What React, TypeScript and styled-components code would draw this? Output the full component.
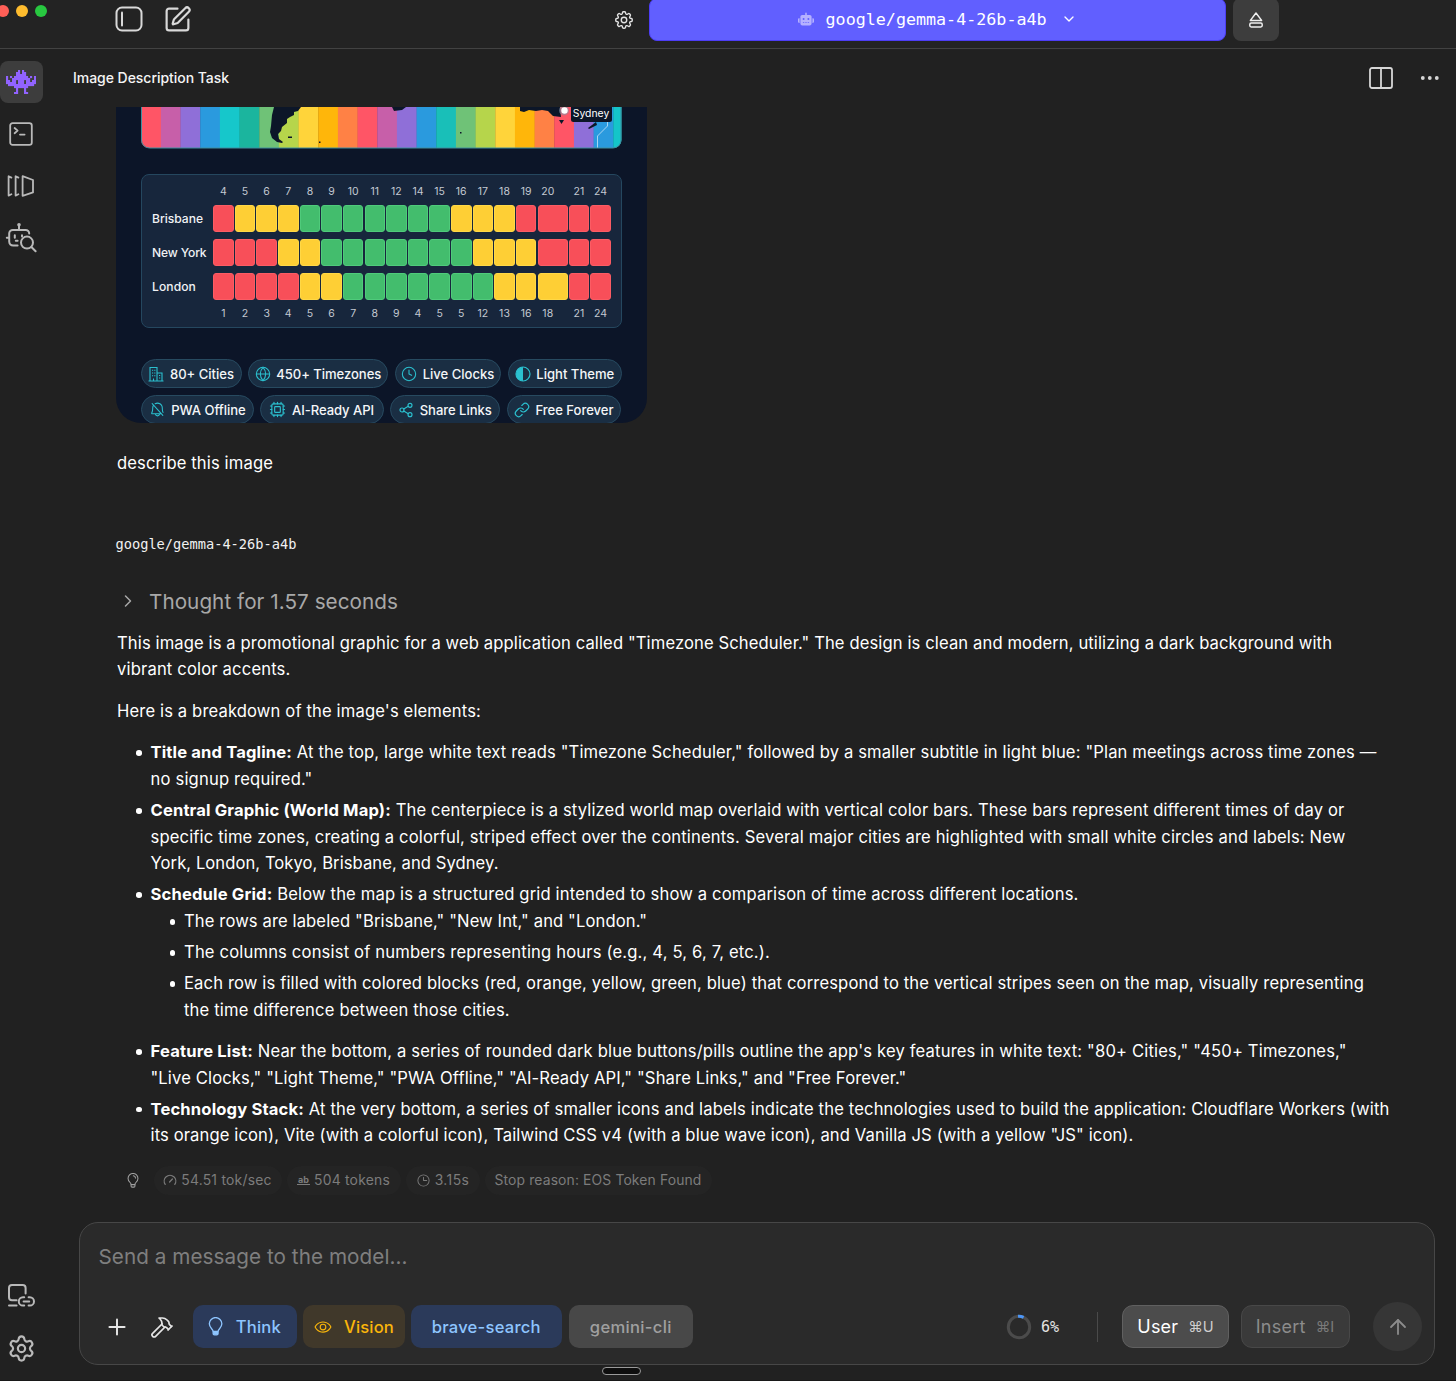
import React from "react";
import styled, { createGlobalStyle, css } from "styled-components";
import { SquarePen, Settings, Globe, Clock, Cpu, Share2, Link, ChevronDown, ChevronRight, Plus, ArrowUp, Hammer } from "lucide-react";
import { PiEye, PiBellSlash, PiClock } from "react-icons/pi";
import { HiOutlineCog8Tooth } from "react-icons/hi2";
import { FaRobot } from "react-icons/fa6";

const sans = `Inter, "Liberation Sans", sans-serif`;
const mono = `"DejaVu Sans Mono", "Liberation Mono", monospace`;

const GlobalStyle = createGlobalStyle`
  * { box-sizing: border-box; }
  html, body { margin: 0; background: #212121; }
  body { font-family: ${sans}; color: #fff; overflow: hidden; }
  svg { display: block; flex: none; }
  p, ul { margin: 0; padding: 0; list-style: none; }
`;

const Window = styled.div`
  display: flex;
  flex-direction: column;
  width: 1456px;
  height: 1381px;
  overflow: hidden;
  background: #212121;
  border-bottom: 1px solid #181818;
`;

const TopBar = styled.header`
  display: flex;
  height: 49px;
  flex: none;
  align-items: flex-start;
  background: #232323;
  border-bottom: 1px solid #424242;
`;

const TrafficLights = styled.div`
  display: flex;
  gap: 7.2px;
  margin: 5.2px 0 0 -3.3px;
`;

const Light = styled.i<{ $color: string }>`
  width: 12px;
  height: 12px;
  border-radius: 50%;
  background: ${(p) => p.$color};
`;

const TopTools = styled.div`
  display: flex;
  align-items: center;
  gap: 20px;
  height: 38px;
  margin-left: 68px;
  color: #d9d9d9;
`;

const GearSlot = styled.div`
  display: flex;
  align-items: center;
  height: 39px;
  margin-left: 420.5px;
  color: #e2e2e2;
`;

const ModelPicker = styled.button`
  display: flex;
  align-items: center;
  justify-content: center;
  width: 577px;
  height: 43px;
  margin: -2px 0 0 14px;
  padding: 0 0 1px 0;
  border: 1.5px solid #4d3df5;
  border-radius: 8px;
  background: #615fff;
  color: #fff;
  font: 16.7px ${mono};
`;

const PickerName = styled.span`
  margin: 0 14px 0 12px;
`;

const Eject = styled.button`
  display: flex;
  align-items: center;
  justify-content: center;
  width: 46.5px;
  height: 43px;
  margin: -2px 0 0 7px;
  padding: 0;
  border: 0;
  border-radius: 8px;
  background: #3d3d3d;
  color: #eee;
`;

const Main = styled.div`
  display: flex;
  flex: 1;
  min-height: 0;
`;

const Sidebar = styled.nav`
  display: flex;
  flex-direction: column;
  width: 42.5px;
  height: 1331px;
  padding: 12px 0 7px;
  color: #b9b9b9;
`;

const SideItem = styled.div<{ $active?: boolean; $h: number }>`
  display: flex;
  align-items: center;
  justify-content: center;
  height: ${(p) => p.$h}px;
  ${(p) =>
    p.$active &&
    css`
      margin-bottom: 5px;
      border-radius: 8px;
      background: #3d3d3d;
    `}
`;

const Spacer = styled.div`
  flex: 1;
`;

const Chat = styled.main`
  display: flex;
  flex-direction: column;
  flex: 1;
  min-width: 0;
`;

const ChatHeader = styled.div`
  display: flex;
  align-items: center;
  gap: 27px;
  height: 58px;
  flex: none;
  padding: 0 16px 0 30.5px;
  color: #d6d6d6;
  font-size: 14px;
`;

const ChatTitle = styled.span`
  flex: 1;
  padding-bottom: 1px;
  color: #f5f5f5;
  font-weight: 500;
`;

const Scroll = styled.section`
  display: flex;
  flex-direction: column;
  height: 1115px;
  flex: none;
  padding-left: 73px;
`;

const Attachment = styled.figure`
  display: flex;
  flex-direction: column;
  width: 531px;
  height: 315.5px;
  flex: none;
  margin: 0;
  padding: 0 24.5px 0 25.5px;
  overflow: hidden;
  border-radius: 0 0 25px 25px;
  background: #0c1528;
`;

const Schedule = styled.div`
  display: grid;
  grid-template-rows: 26.2px 34.1px 34.1px 34.1px 18.6px;
  align-content: start;
  height: 154px;
  flex: none;
  margin-top: 25.3px;
  border: 1.2px solid #25475f;
  border-radius: 8px;
  background: #17263c;
`;

const ScheduleRow = styled.div<{ $top?: number }>`
  display: grid;
  grid-template-columns: 60px repeat(15, 20.5px) 30px repeat(2, 20.5px);
  column-gap: 1.13px;
  align-items: center;
  padding: ${(p) => p.$top ?? 0}px 0 0 10px;
`;

const City = styled.span`
  font-size: 12.1px;
  font-weight: 500;
  color: #f0f2f5;
  white-space: nowrap;
`;

const Hour = styled.span`
  width: 20.5px;
  text-align: center;
  font-size: 10.5px;
  color: #c3c9d2;
`;

const slotColors: Record<string, [string, string]> = {
  r: ["#f84f59", "#fb5c64"],
  y: ["#fecf35", "#ffd846"],
  g: ["#43bd6d", "#4fcb7b"],
};

const Slot = styled.i<{ $kind: string }>`
  height: 26.5px;
  border-radius: 3px;
  border: 1px solid ${(p) => slotColors[p.$kind][1]};
  background: ${(p) => slotColors[p.$kind][0]};
`;

const Features = styled.div<{ $mt: number }>`
  display: flex;
  gap: 6.5px;
  height: 29.5px;
  flex: none;
  margin-top: ${(p) => p.$mt}px;
`;

const Feature = styled.span<{ $w: number }>`
  display: flex;
  align-items: center;
  justify-content: center;
  gap: 5.5px;
  width: ${(p) => p.$w}px;
  border: 1.2px solid #274a60;
  border-radius: 15px;
  background: #1a2e43;
  color: #f4f6f8;
  font-size: 13.05px;
  font-weight: 500;
  white-space: nowrap;
  svg {
    color: #2bc0cf;
  }
`;

const Prompt = styled.p`
  margin-top: 27px;
  padding-left: 1.5px;
  line-height: 27px;
  font-size: 16.6px;
`;

const ModelName = styled.p`
  margin-top: 57.5px;
  line-height: 20px;
  font-family: ${mono};
  font-size: 13.66px;
  color: #f2f2f2;
`;

const Thought = styled.div`
  display: flex;
  align-items: center;
  gap: 11.5px;
  height: 28px;
  margin-top: 33px;
  padding-left: 2px;
  color: #a8a8a8;
  font-size: 20.7px;
`;

const Answer = styled.article`
  display: flex;
  flex-direction: column;
  gap: 14.9px;
  padding: 14.9px 0 0 1.5px;
  font-size: 16.6px;
  line-height: 26.6px;
  white-space: nowrap;
`;

const List = styled.ul<{ $nested?: boolean }>`
  display: flex;
  flex-direction: column;
  gap: 4.5px;
  padding-bottom: ${(p) => (p.$nested ? 10.3 : 0)}px;
`;

const Item = styled.li`
  display: grid;
  grid-template-columns: 19.5px auto;
  padding-left: 14px;
  &::before {
    content: "";
    width: 5.6px;
    height: 5.6px;
    margin: 11px 0 0 5px;
    border-radius: 50%;
    background: #fff;
  }
`;

const Line = styled.span<{ $ls?: number }>`
  display: block;
  width: max-content;
  letter-spacing: ${(p) => p.$ls ?? 0}px;
`;

const Inline = styled.span<{ $ls?: number }>`
  letter-spacing: ${(p) => p.$ls ?? 0}px;
  white-space: nowrap;
`;

const B = styled.b`
  font-weight: 700;
`;

const Stats = styled.div`
  display: flex;
  align-items: center;
  gap: 5px;
  margin-top: 16px;
  padding-left: 10.5px;
  height: 30px;
  color: #7c7c7c;
  font-size: 13.9px;
`;

const StatBulb = styled.span`
  margin: 0 9.5px 0 1px;
  color: #a0a0a0;
`;

const Stat = styled.span<{ $w: number }>`
  display: flex;
  align-items: center;
  justify-content: center;
  gap: 4px;
  width: ${(p) => p.$w}px;
  height: 29px;
  border-radius: 15px;
  background: #242424;
`;

const Ab = styled.u`
  width: 13px;
  text-align: center;
  text-decoration: none;
  border-bottom: 1px solid #7c7c7c;
  font-size: 9px;
  line-height: 8px;
  font-weight: 700;
`;

const Composer = styled.div`
  display: flex;
  flex-direction: column;
  width: 1356px;
  height: 142.5px;
  flex: none;
  margin-left: 36.5px;
  padding: 19px 12px 0 18.5px;
  border: 1px solid #474747;
  border-radius: 19px;
  background: #2a2a2a;
`;

const Placeholder = styled.div`
  height: 30px;
  line-height: 30px;
  font-size: 20.7px;
  color: #7f7f7f;
`;

const Actions = styled.div`
  display: flex;
  align-items: center;
  height: 48px;
  margin-top: 30.5px;
`;

const IconButton = styled.span<{ $ml: number }>`
  display: flex;
  margin-left: ${(p) => p.$ml}px;
  color: #e6e6e6;
`;

const Chip = styled.button<{ $w: number; $bg: string; $fg: string; $ml: number }>`
  display: flex;
  align-items: center;
  justify-content: center;
  gap: 12.5px;
  width: ${(p) => p.$w}px;
  height: 43px;
  margin: 0 0 0 ${(p) => p.$ml}px;
  padding: 0;
  border: 0;
  border-radius: 10px;
  background: ${(p) => p.$bg};
  color: ${(p) => p.$fg};
  font: 500 16.6px ${sans};
`;

const Percent = styled.span`
  margin-left: 8.5px;
  font: 15px ${mono};
  color: #e4e4e4;
`;

const Divider = styled.i`
  width: 1px;
  height: 30px;
  margin: 0 24px 0 38px;
  background: #4a4a4a;
`;

const KeyButton = styled.button<{ $w: number; $bg: string; $fg: string; $key: string; $line: string }>`
  display: flex;
  align-items: center;
  justify-content: center;
  gap: 10px;
  width: ${(p) => p.$w}px;
  height: 43px;
  margin: 0 11.5px 0 0;
  padding: 0;
  border: 1px solid ${(p) => p.$line};
  border-radius: 11px;
  background: ${(p) => p.$bg};
  color: ${(p) => p.$fg};
  font: 18px ${sans};
  kbd {
    font: 14.6px ${sans};
    color: ${(p) => p.$key};
  }
`;

const Send = styled.button`
  display: flex;
  align-items: center;
  justify-content: center;
  width: 49px;
  height: 49px;
  margin: 0 0 0 12px;
  padding: 0;
  border: 0;
  border-radius: 50%;
  background: #363636;
  color: #8c8c8c;
`;

const Handle = styled.div`
  width: 39px;
  height: 8px;
  flex: none;
  margin: 2.5px 0 0 559px;
  border: 1px solid #9a9a9a;
  border-radius: 5px;
  background: #0e0e0e;
`;

const invader = [
  "......#.#......",
  ".....##.##.....",
  ".....#####.....",
  "#.#.#######.#.#",
  "#..#########..#",
  "##.##.###.##.##",
  "#####.###.#####",
  ".#############.",
  "....#######....",
  ".....#...#.....",
  ".....#...#.....",
  "....##...##....",
];

const Invader = () => (
  <svg width="30" height="24" viewBox="0 0 15 12" preserveAspectRatio="none" fill="#9163ff">
    {invader.flatMap((row, y) => [...row].map((c, x) => (c === "#" ? <rect key={`${x}-${y}`} x={x} y={y} width="1.06" height="1.06" /> : null)))}
  </svg>
);

const PanelIcon = () => (
  <svg width="28" height="26" viewBox="0 0 28 26" fill="none" stroke="currentColor" strokeWidth="2" strokeLinecap="round">
    <rect x="1.5" y="1.5" width="25" height="23" rx="5.5" />
    <path d="M7 6.5v13" />
  </svg>
);

const EjectIcon = () => (
  <svg width="16" height="18" viewBox="0 0 16 18" fill="none" stroke="currentColor" strokeWidth="1.5" strokeLinejoin="round">
    <path d="M8 2l5.6 7.4H2.4z" />
    <rect x="1.8" y="12" width="12.4" height="4" rx="1.4" />
  </svg>
);

const BulbIcon = ({ size, shine }: { size: number; shine?: boolean }) => (
  <svg width={size * 0.8} height={size} viewBox="0 0 16 20" fill="none" stroke="currentColor" strokeWidth="1.4" strokeLinecap="round" strokeLinejoin="round">
    <path d="M5.4 15.2c0-2.4-4-3.8-4-8a6.6 6.6 0 0 1 13.2 0c0 4.2-4 5.6-4 8z" />
    <path d="M5.4 15.6h5.2v1.8a1.4 1.4 0 0 1-1.4 1.4H6.8a1.4 1.4 0 0 1-1.4-1.4z" fill={shine ? "none" : "currentColor"} />
    {shine && <path d="M8.4 3.8a3.4 3.4 0 0 1 3 3" />}
  </svg>
);

const TerminalIcon = () => (
  <svg width="24" height="24" viewBox="0 0 24 24" fill="none" stroke="currentColor" strokeWidth="1.8" strokeLinecap="round" strokeLinejoin="round">
    <rect x="1.2" y="1.2" width="21.6" height="21.6" rx="2.4" />
    <path d="M5.6 6l3 2.6-3 2.6M11 12.6h4.6" />
  </svg>
);

const LibraryIcon = () => (
  <svg width="28" height="24" viewBox="0 0 28 24" fill="none" stroke="currentColor" strokeWidth="1.8" strokeLinejoin="round" strokeLinecap="round">
    <path d="M4.4 3.6L1.6 2.2v19.4l2.8-1.3M11.4 3.6L8.6 2.2v19.4l2.8-1.3M15.6 2.2v19.6l10.4-3.4V6z" />
  </svg>
);

const RobotSearchIcon = () => (
  <svg width="32" height="32" viewBox="0 0 32 32" fill="none" stroke="currentColor" strokeWidth="2" strokeLinecap="round" strokeLinejoin="round">
    <circle cx="14" cy="2.8" r="1.8" fill="currentColor" stroke="none" />
    <path d="M14 4v4M12.6 23.6H8.2a4 4 0 0 1-4-4V11.6a3.6 3.6 0 0 1 3.6-3.6h12.8a3.6 3.6 0 0 1 3.6 3.6M1.8 15.8h2.4M9.8 13.2v2.6M17 13.2v1.4M10.8 18.8h1.8" />
    <circle cx="22" cy="20.6" r="6" />
    <path d="M26.4 25l4.2 4.2" />
  </svg>
);

const DeviceLinkIcon = () => (
  <svg width="28" height="26" viewBox="0 0 28 26" fill="none" stroke="currentColor" strokeWidth="2" strokeLinecap="round">
    <path d="M9.6 17.2H5a3 3 0 0 1-3-3V5a3 3 0 0 1 3-3h10.6a3 3 0 0 1 3 3v5.4M2 22.6h7.6" />
    <path d="M17.2 22.6h-1.2a4.2 4.2 0 0 1 0-8.4h1.2M21.6 14.2h1.2a4.2 4.2 0 0 1 0 8.4h-1.2M16.6 18.4h5.6" />
  </svg>
);

const ColumnsIcon = () => (
  <svg width="24" height="22" viewBox="0 0 24 22" fill="none" stroke="currentColor" strokeWidth="1.8">
    <rect x="1" y="1" width="22" height="20" rx="2" />
    <path d="M12 1v20" />
  </svg>
);

const DotsIcon = () => (
  <svg width="20" height="6" viewBox="0 0 20 6" fill="currentColor">
    <circle cx="2.8" cy="3" r="1.9" />
    <circle cx="9.8" cy="3" r="1.9" />
    <circle cx="16.8" cy="3" r="1.9" />
  </svg>
);

const BuildingsIcon = () => (
  <svg width="16" height="16" viewBox="0 0 16 16" fill="none" stroke="currentColor" strokeWidth="1.1">
    <path d="M.5 15h15M2 15V1.5h7V15M9 7h5v8M4 4.2h1.2M6.2 4.2h1.2M4 7h1.2M6.2 7h1.2M4 9.8h1.2M6.2 9.8h1.2M11 9.5h1.2M11 12h1.2M5.5 15v-2.5" />
  </svg>
);

const HalfIcon = () => (
  <svg width="16" height="16" viewBox="0 0 16 16">
    <circle cx="8" cy="8" r="7" fill="none" stroke="currentColor" strokeWidth="1.2" />
    <path d="M8 1a7 7 0 0 0 0 14z" fill="currentColor" />
  </svg>
);

const SpeedIcon = () => (
  <svg width="14" height="14" viewBox="0 0 14 14" fill="none" stroke="currentColor" strokeWidth="1.2" strokeLinecap="round">
    <path d="M2.2 11.4a5.8 5.8 0 1 1 9.6 0M6.6 9l2.8-3" />
  </svg>
);

const RingIcon = () => (
  <svg width="26" height="26" viewBox="0 0 26 26" fill="none" strokeWidth="3">
    <circle cx="13" cy="13" r="10.7" stroke="#4b4b4b" />
    <path d="M12 2.3a10.7 10.7 0 0 1 5.6 1.1" stroke="#4c95f5" />
  </svg>
);

const stripes = "#ff5566 #c75fa9 #8f6fd8 #2a9ade #16c7cb #1bb59e #6fc277 #b6d54b #ffd43a #ffb60a #ff8145 #ff5566 #c75fa9 #8f6fd8 #2a9ade #19bfb8 #6fc277 #b6d54b #ffd43a #ffb60a #ff8145 #ff5566 #8f6fd8 #2a9ade #14c5c9".split(" ");

const MapStrip = () => (
  <svg width="481" height="42" viewBox="0 0 481 42">
    <defs>
      <clipPath id="mapEdge">
        <path d="M0-5H480.5V33a8 8 0 0 1-8 8H8a8 8 0 0 1-8-8z" />
      </clipPath>
    </defs>
    <g clipPath="url(#mapEdge)">
      {stripes.map((c, i) => (
        <rect key={i} x={i * 19.67 + 0.2} y="-1" width="20" height="44" fill={c} />
      ))}
      <g fill="#0c1628">
        <path d="M133 0H160L157 4 153 5 153 8 149 10 146 12 146 16 141 20 140 24 137 27 138 32 142 35 141 36 136 35 131 31 129 25 130 19 131 8z" />
        <path d="M147 29.5h4v1.5h-4zM178 34.5h1.500v1.500H178zM319 25h1.500v1.500H319z" />
        <path d="M251 0h14l-4 3-8 1zM379 0h40l1 10-8-1-5-5-6-1-6 1-7-1-5 2-4-1z" />
        <path d="M418 13h5l-2.5 4zM455 15l-8 6 1 1 8-4z" />
      </g>
      <path d="M466.5 0v19l-10 10v13" fill="none" stroke="#a9d5f2" strokeWidth="1" />
      <circle cx="423" cy="3.5" r="5" fill="#8893a5" opacity=".6" />
      <circle cx="423.5" cy="3.5" r="3.2" fill="#fff" />
      <rect x="430" y="-6" width="41" height="21" rx="2.5" fill="#0c1628" />
      <text x="450" y="10.2" textAnchor="middle" fontFamily={sans} fontSize="10.4" fill="#fff">
        Sydney
      </text>
    </g>
    <path d="M.5 0V33a8 8 0 0 0 8 8h463.500a8 8 0 0 0 8-8V0" fill="none" stroke="#3f8f9f" strokeWidth="1" />
  </svg>
);

const topHours = [4, 5, 6, 7, 8, 9, 10, 11, 12, 14, 15, 16, 17, 18, 19, 20, 21, 24];
const bottomHours = [1, 2, 3, 4, 5, 6, 7, 8, 9, 4, 5, 5, 12, 13, 16, 18, 21, 24];
const cities: [string, string, number][] = [
  ["Brisbane", "ryyygggggggyyyrrrr", -0.02],
  ["New York", "rrryygggggggyyyrrr", -0.14],
  ["London", "rrrryygggggggyyyrr", 0.08],
];

const Hours = ({ values, top }: { values: number[]; top?: number }) => (
  <ScheduleRow $top={top}>
    <span />
    {values.map((v, i) => (
      <Hour key={i}>{v}</Hour>
    ))}
  </ScheduleRow>
);

export default function App() {
  return (
    <>
      <GlobalStyle />
      <Window>
        <TopBar>
          <TrafficLights>
            <Light $color="#ff5f57" />
            <Light $color="#febc2e" />
            <Light $color="#28c840" />
          </TrafficLights>
          <TopTools>
            <PanelIcon />
            <SquarePen size={29} strokeWidth={1.8} />
          </TopTools>
          <GearSlot>
            <HiOutlineCog8Tooth size={22} />
          </GearSlot>
          <ModelPicker>
            <FaRobot size={16} color="#b5b1ff" />
            <PickerName>google/gemma-4-26b-a4b</PickerName>
            <ChevronDown size={16} strokeWidth={2} />
          </ModelPicker>
          <Eject>
            <EjectIcon />
          </Eject>
        </TopBar>
        <Main>
          <Sidebar>
            <SideItem $h={42} $active>
              <Invader />
            </SideItem>
            <SideItem $h={52}>
              <TerminalIcon />
            </SideItem>
            <SideItem $h={52}>
              <LibraryIcon />
            </SideItem>
            <SideItem $h={52}>
              <RobotSearchIcon />
            </SideItem>
            <Spacer />
            <SideItem $h={57}>
              <DeviceLinkIcon />
            </SideItem>
            <SideItem $h={49}>
              <Settings size={29} strokeWidth={1.8} />
            </SideItem>
          </Sidebar>
          <Chat>
            <ChatHeader>
              <ChatTitle>
                <Inline $ls={-0.04}>Image Description Task</Inline>
              </ChatTitle>
              <ColumnsIcon />
              <DotsIcon />
            </ChatHeader>
            <Scroll>
              <Attachment>
                <MapStrip />
                <Schedule>
                  <Hours values={topHours} top={5.4} />
                  {cities.map(([name, slots, ls]) => (
                    <ScheduleRow key={name}>
                      <City>
                        <Inline $ls={ls}>{name}</Inline>
                      </City>
                      {[...slots].map((k, i) => (
                        <Slot key={i} $kind={k} />
                      ))}
                    </ScheduleRow>
                  ))}
                  <Hours values={bottomHours} />
                </Schedule>
                <Features $mt={30.5}>
                  <Feature $w={100.5}><BuildingsIcon />80+ Cities</Feature>
                  <Feature $w={140}><Globe size={16} strokeWidth={1.6} /><Inline $ls={-0.04}>450+ Timezones</Inline></Feature>
                  <Feature $w={106.5}><Clock size={16} strokeWidth={1.6} />Live Clocks</Feature>
                  <Feature $w={114}><HalfIcon />Light Theme</Feature>
                </Features>
                <Features $mt={6.5}>
                  <Feature $w={112.5}><PiBellSlash size={17} /><Inline $ls={-0.03}>PWA Offline</Inline></Feature>
                  <Feature $w={123.5}><Cpu size={17} strokeWidth={1.6} /><Inline $ls={-0.05}>AI-Ready API</Inline></Feature>
                  <Feature $w={110}><Share2 size={16} strokeWidth={1.7} /><Inline $ls={-0.04}>Share Links</Inline></Feature>
                  <Feature $w={114.5}><Link size={16} strokeWidth={1.8} /><Inline $ls={-0.02}>Free Forever</Inline></Feature>
                </Features>
              </Attachment>
              <Prompt><Inline $ls={0.131}>describe this image</Inline></Prompt>
              <ModelName>google/gemma-4-26b-a4b</ModelName>
              <Thought>
                <ChevronRight size={20} strokeWidth={1.8} />
                <Inline $ls={0.04}>Thought for 1.57 seconds</Inline>
              </Thought>
              <Answer>
                <p>
                  <Line $ls={0.111}>This image is a promotional graphic for a web application called "Timezone Scheduler." The design is clean and modern, utilizing a dark background with</Line>
                  <Line $ls={0.166}>vibrant color accents.</Line>
                </p>
                <p>
                  <Line $ls={0.135}>Here is a breakdown of the image's elements:</Line>
                </p>
                <List>
                  <Item>
                    <div>
                      <Line $ls={0.134}><B>Title and Tagline:</B> At the top, large white text reads "Timezone Scheduler," followed by a smaller subtitle in light blue: "Plan meetings across time zones —</Line>
                      <Line $ls={0.179}>no signup required."</Line>
                    </div>
                  </Item>
                  <Item>
                    <div>
                      <Line $ls={0.135}><B>Central Graphic (World Map):</B> The centerpiece is a stylized world map overlaid with vertical color bars. These bars represent different times of day or</Line>
                      <Line $ls={0.144}>specific time zones, creating a colorful, striped effect over the continents. Several major cities are highlighted with small white circles and labels: New</Line>
                      <Line $ls={0.063}>York, London, Tokyo, Brisbane, and Sydney.</Line>
                    </div>
                  </Item>
                  <Item>
                    <div>
                      <Line $ls={0.151}><B>Schedule Grid:</B> Below the map is a structured grid intended to show a comparison of time across different locations.</Line>
                      <List $nested>
                        <Item>
                          <Line $ls={0.108}>The rows are labeled "Brisbane," "New Int," and "London."</Line>
                        </Item>
                        <Item>
                          <Line $ls={0.165}>The columns consist of numbers representing hours (e.g., 4, 5, 6, 7, etc.).</Line>
                        </Item>
                        <Item>
                          <div>
                            <Line $ls={0.133}>Each row is filled with colored blocks (red, orange, yellow, green, blue) that correspond to the vertical stripes seen on the map, visually representing</Line>
                            <Line $ls={0.16}>the time difference between those cities.</Line>
                          </div>
                        </Item>
                      </List>
                    </div>
                  </Item>
                  <Item>
                    <div>
                      <Line $ls={0.16}><B>Feature List:</B> Near the bottom, a series of rounded dark blue buttons/pills outline the app's key features in white text: "80+ Cities," "450+ Timezones,"</Line>
                      <Line $ls={0.127}>"Live Clocks," "Light Theme," "PWA Offline," "AI-Ready API," "Share Links," and "Free Forever."</Line>
                    </div>
                  </Item>
                  <Item>
                    <div>
                      <Line $ls={0.147}><B>Technology Stack:</B> At the very bottom, a series of smaller icons and labels indicate the technologies used to build the application: Cloudflare Workers (with</Line>
                      <Line $ls={0.116}>its orange icon), Vite (with a colorful icon), Tailwind CSS v4 (with a blue wave icon), and Vanilla JS (with a yellow "JS" icon).</Line>
                    </div>
                  </Item>
                </List>
              </Answer>
              <Stats>
                <StatBulb><BulbIcon size={15} shine /></StatBulb>
                <Stat $w={128}><SpeedIcon /><Inline $ls={0.23}>54.51 tok/sec</Inline></Stat>
                <Stat $w={114}><Ab>ab</Ab><Inline $ls={0.22}>504 tokens</Inline></Stat>
                <Stat $w={74}><PiClock size={15} /><Inline $ls={0.45}>3.15s</Inline></Stat>
                <Stat $w={227}><Inline $ls={0.13}>Stop reason: EOS Token Found</Inline></Stat>
              </Stats>
            </Scroll>
            <Composer>
              <Placeholder><Inline $ls={0.05}>Send a message to the model...</Inline></Placeholder>
              <Actions>
                <IconButton $ml={5}><Plus size={26} strokeWidth={1.8} /></IconButton>
                <IconButton $ml={20.5}><Hammer size={24} strokeWidth={1.7} /></IconButton>
                <Chip $w={104} $bg="#2b3a5a" $fg="#8ec5ff" $ml={18.5}><BulbIcon size={19} /><Inline $ls={0.15}>Think</Inline></Chip>
                <Chip $w={102.5} $bg="#40382a" $fg="#fab60a" $ml={6}><PiEye size={18} /><Inline $ls={0.15}>Vision</Inline></Chip>
                <Chip $w={150.5} $bg="#2b3a5a" $fg="#8ec5ff" $ml={6}><Inline $ls={0.22}>brave-search</Inline></Chip>
                <Chip $w={123.5} $bg="#484848" $fg="#a0a0a0" $ml={7.5}><Inline $ls={0.32}>gemini-cli</Inline></Chip>
                <Spacer />
                <RingIcon />
                <Percent>6%</Percent>
                <Divider />
                <KeyButton $w={107} $bg="#4c4c4c" $fg="#fff" $key="#cfcfcf" $line="#606060"><Inline $ls={0.2}>User</Inline><kbd>⌘U</kbd></KeyButton>
                <KeyButton $w={109} $bg="#3a3a3a" $fg="#8c8c8c" $key="#7a7a7a" $line="#484848"><Inline $ls={0.27}>Insert</Inline><kbd>⌘I</kbd></KeyButton>
                <Send><ArrowUp size={24} strokeWidth={1.8} /></Send>
              </Actions>
            </Composer>
            <Handle />
          </Chat>
        </Main>
      </Window>
    </>
  );
}
